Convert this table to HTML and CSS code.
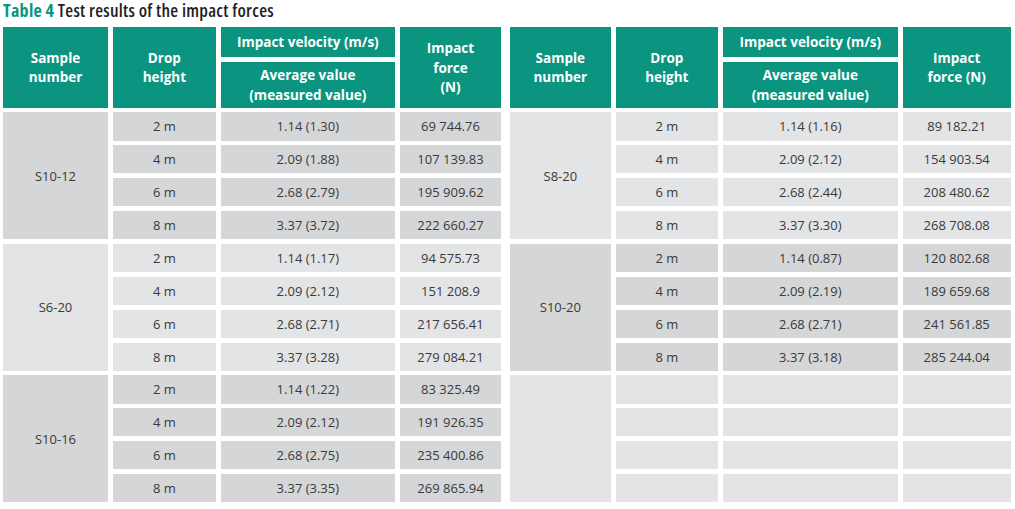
FILE: index.html
```html
<!DOCTYPE html>
<html>
<head>
<meta charset="utf-8">
<link rel="stylesheet" href="styles.css">
</head>
<body>
<div class="title"><span class="tnum">Table 4</span> Test results of the impact forces</div>
<div class="tables">
  <div class="tbl left">
    <div class="hd">Sample<br>number</div>
    <div class="hd">Drop<br>height</div>
    <div class="hd">Impact velocity (m/s)</div>
    <div class="hd">Impact<br>force<br>(N)</div>
    <div class="hd">Average value<br>(measured value)</div>

    <div class="grp dark">S10-12</div>
    <div class="c dark">2 m</div><div class="c dark">1.14 (1.30)</div><div class="c dark">69 744.76</div>
    <div class="c dark">4 m</div><div class="c dark">2.09 (1.88)</div><div class="c dark">107 139.83</div>
    <div class="c dark">6 m</div><div class="c dark">2.68 (2.79)</div><div class="c dark">195 909.62</div>
    <div class="c dark">8 m</div><div class="c dark">3.37 (3.72)</div><div class="c dark">222 660.27</div>

    <div class="grp light">S6-20</div>
    <div class="c light">2 m</div><div class="c light">1.14 (1.17)</div><div class="c light">94 575.73</div>
    <div class="c light">4 m</div><div class="c light">2.09 (2.12)</div><div class="c light">151 208.9</div>
    <div class="c light">6 m</div><div class="c light">2.68 (2.71)</div><div class="c light">217 656.41</div>
    <div class="c light">8 m</div><div class="c light">3.37 (3.28)</div><div class="c light">279 084.21</div>

    <div class="grp dark">S10-16</div>
    <div class="c dark">2 m</div><div class="c dark">1.14 (1.22)</div><div class="c dark">83 325.49</div>
    <div class="c dark">4 m</div><div class="c dark">2.09 (2.12)</div><div class="c dark">191 926.35</div>
    <div class="c dark">6 m</div><div class="c dark">2.68 (2.75)</div><div class="c dark">235 400.86</div>
    <div class="c dark">8 m</div><div class="c dark">3.37 (3.35)</div><div class="c dark">269 865.94</div>
  </div>
  <div class="tbl right">
    <div class="hd">Sample<br>number</div>
    <div class="hd">Drop<br>height</div>
    <div class="hd">Impact velocity (m/s)</div>
    <div class="hd">Impact<br>force (N)</div>
    <div class="hd">Average value<br>(measured value)</div>

    <div class="grp light">S8-20</div>
    <div class="c light">2 m</div><div class="c light">1.14 (1.16)</div><div class="c light">89 182.21</div>
    <div class="c light">4 m</div><div class="c light">2.09 (2.12)</div><div class="c light">154 903.54</div>
    <div class="c light">6 m</div><div class="c light">2.68 (2.44)</div><div class="c light">208 480.62</div>
    <div class="c light">8 m</div><div class="c light">3.37 (3.30)</div><div class="c light">268 708.08</div>

    <div class="grp dark">S10-20</div>
    <div class="c dark">2 m</div><div class="c dark">1.14 (0.87)</div><div class="c dark">120 802.68</div>
    <div class="c dark">4 m</div><div class="c dark">2.09 (2.19)</div><div class="c dark">189 659.68</div>
    <div class="c dark">6 m</div><div class="c dark">2.68 (2.71)</div><div class="c dark">241 561.85</div>
    <div class="c dark">8 m</div><div class="c dark">3.37 (3.18)</div><div class="c dark">285 244.04</div>

    <div class="grp light"></div>
    <div class="c light"></div><div class="c light"></div><div class="c light"></div>
    <div class="c light"></div><div class="c light"></div><div class="c light"></div>
    <div class="c light"></div><div class="c light"></div><div class="c light"></div>
    <div class="c light"></div><div class="c light"></div><div class="c light"></div>
  </div>
</div>
</body>
</html>
```
FILE: styles.css
```css
html, body {
  margin: 0;
  padding: 0;
  background: #ffffff;
}
body {
  width: 1015px;
  height: 509px;
  overflow: hidden;
  font-family: "Open Sans", "Noto Sans", sans-serif;
}
.title {
  height: 20px;
  line-height: 20px;
  padding-left: 3px;
  margin-bottom: 7px;
  font-size: 18px;
  font-weight: 600;
  font-stretch: 75%;
  letter-spacing: 0.27px;
  color: #1e1e1e;
  white-space: nowrap;
}
.tnum {
  color: #0b9580;
  font-weight: 700;
}
.tables {
  display: flex;
  gap: 9px;
  padding-left: 3px;
}
.tbl {
  display: grid;
  grid-template-rows: 30px 46px repeat(12, 28.2px);
  row-gap: 4.7px;
  column-gap: 5px;
}
.left {
  grid-template-columns: 105px 102.7px 174.3px 101px;
}
.right {
  grid-template-columns: 100.7px 102.3px 174.7px 108px;
}
.hd {
  background: #0b9580;
  color: #ffffff;
  font-weight: 700;
  font-size: 13.5px;
  line-height: 19.5px;
  padding-top: 2px;
  display: flex;
  align-items: center;
  justify-content: center;
  text-align: center;
}
.tbl .hd:nth-child(1),
.tbl .hd:nth-child(2),
.tbl .hd:nth-child(4) {
  grid-row: span 2;
}
.grp {
  grid-row: span 4;
}
.c, .grp {
  display: flex;
  align-items: center;
  justify-content: center;
  font-size: 13px;
  color: #3a3a3a;
  white-space: nowrap;
}
.dark {
  background: #d5d6d7;
}
.light {
  background: #e3e4e5;
}
```
